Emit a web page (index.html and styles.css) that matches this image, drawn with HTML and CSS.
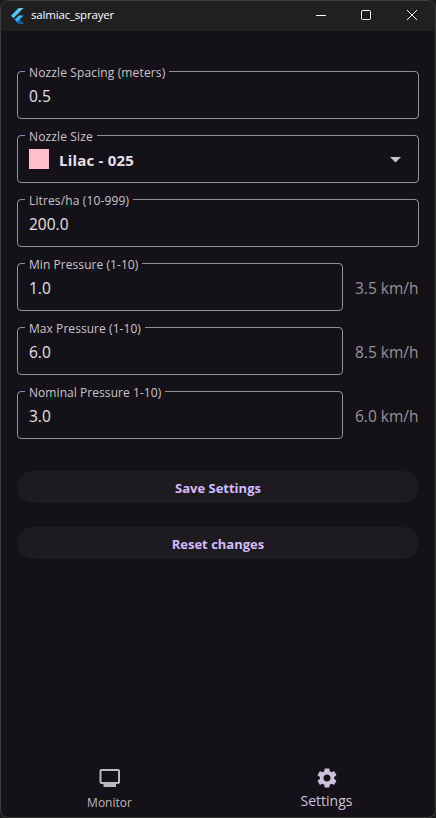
FILE: index.html
```html
<!DOCTYPE html>
<html lang="en">
<head>
<meta charset="utf-8">
<title>salmiac_sprayer</title>
<link rel="stylesheet" href="styles.css">
</head>
<body>
<div class="window">
  <header class="titlebar">
    <svg class="logo" width="13" height="16" viewBox="0 0 13 16">
      <path d="M7.6 0H12.7L2.4 10.3 0 7.7Z" fill="#54c5f8"/>
      <path d="M7.9 7.4H12.7L8.6 11.6 12.7 16H7.8L3.6 11.6Z" fill="#39b6f5"/>
      <path d="M6.1 14.1L8.6 11.6 12.7 16H7.8Z" fill="#0b5fa8"/>
    </svg>
    <h1 class="title">salmiac_sprayer</h1>
    <div class="controls">
      <svg width="46" height="30" viewBox="0 0 46 30"><path d="M18 14.5H28" stroke="#fff"/></svg>
      <svg width="46" height="30" viewBox="0 0 46 30"><rect x="17.5" y="9.5" width="9" height="9" rx="1" fill="none" stroke="#fff"/></svg>
      <svg width="45" height="30" viewBox="0 0 45 30"><path d="M17 9L27 19M27 9L17 19" stroke="#fff"/></svg>
    </div>
  </header>
  <main class="form">
    <div class="row">
      <fieldset class="field"><legend>Nozzle Spacing (meters)</legend><span class="value">0.5</span></fieldset>
    </div>
    <div class="row">
      <fieldset class="field"><legend>Nozzle Size</legend>
        <span class="swatch"></span><span class="value strong">Lilac - 025</span>
        <svg class="arrow" width="11" height="6" viewBox="0 0 11 6"><path d="M0 0H11L5.500 5.500Z" fill="#c4c3c5"/></svg>
      </fieldset>
    </div>
    <div class="row">
      <fieldset class="field"><legend>Litres/ha (10-999)</legend><span class="value">200.0</span></fieldset>
    </div>
    <div class="row">
      <fieldset class="field"><legend class="tight">Min Pressure (1-10)</legend><span class="value">1.0</span></fieldset>
      <span class="speed">3.5 km/h</span>
    </div>
    <div class="row">
      <fieldset class="field"><legend class="tight">Max Pressure (1-10)</legend><span class="value">6.0</span></fieldset>
      <span class="speed">8.5 km/h</span>
    </div>
    <div class="row">
      <fieldset class="field"><legend class="tight">Nominal Pressure 1-10)</legend><span class="value">3.0</span></fieldset>
      <span class="speed">6.0 km/h</span>
    </div>
    <div class="actions">
      <button class="button">Save Settings</button>
      <button class="button">Reset changes</button>
    </div>
  </main>
  <nav class="tabs">
    <a class="tab">
      <svg width="24" height="24" viewBox="0 0 24 24"><path d="M20 3H3.500C2.300 3 1.500 3.800 1.500 5v11c0 1.200.8 2 2 2h2v3h12.500v-3h2c1.200 0 2-.8 2-2V5c0-1.200-.8-2-2-2zm0 13H3.500V5h16.500v11z" fill="#bab9bb"/></svg>
      <span class="tab-label">Monitor</span>
    </a>
    <a class="tab active">
      <svg width="24" height="24" viewBox="0 0 24 24"><path d="M19.140 12.940c.04-.3.06-.61.06-.94 0-.32-.02-.64-.07-.94l2.030-1.580c.18-.14.23-.41.12-.61l-1.920-3.320c-.12-.22-.37-.29-.59-.22l-2.390.96c-.5-.38-1.030-.7-1.620-.94l-.36-2.540c-.04-.24-.24-.41-.48-.41h-3.840c-.24 0-.43.17-.47.41l-.36 2.540c-.59.24-1.130.57-1.620.94l-2.390-.96c-.22-.08-.47 0-.59.22L2.740 8.870c-.12.21-.08.47.12.61l2.030 1.580c-.05.3-.09.63-.09.94s.02.64.07.94l-2.030 1.580c-.18.14-.23.41-.12.61l1.920 3.320c.12.22.37.29.59.22l2.390-.96c.5.38 1.030.7 1.620.94l.36 2.540c.05.24.24.41.48.41h3.840c.24 0 .44-.17.47-.41l.36-2.540c.59-.24 1.130-.56 1.620-.94l2.390.96c.22.08.47 0 .59-.22l1.920-3.320c.12-.22.07-.47-.12-.61l-2.010-1.580zM12 15.600c-1.980 0-3.600-1.620-3.600-3.600s1.620-3.600 3.600-3.600 3.600 1.620 3.600 3.600-1.620 3.600-3.600 3.600z" fill="#ccc2dc"/></svg>
      <span class="tab-label">Settings</span>
    </a>
  </nav>
</div>
</body>
</html>
```
FILE: styles.css
```css
* { box-sizing: border-box; }

body {
  margin: 0;
  background: #1b1b1b;
  font-family: "Open Sans", "Noto Sans", sans-serif;
  color: #e6e0e9;
}

.window {
  display: flex;
  flex-direction: column;
  height: 818px;
  border: 1px solid #3e3e3f;
  border-radius: 8px;
  background: #141218;
  overflow: hidden;
}

.titlebar {
  display: flex;
  align-items: center;
  height: 30px;
  padding-left: 10px;
  background: #202020;
}

.logo { flex: none; margin-top: -1px; }

.title {
  flex: 1;
  margin: -2px 0 0 7px;
  font-size: 11.5px;
  font-weight: 400;
  line-height: 28px;
  letter-spacing: -0.18px;
  color: #fff;
}

.controls { display: flex; }

.form {
  display: flex;
  flex: 1;
  flex-direction: column;
  gap: 16px;
  padding: 40px 16px 0;
}

.row { display: flex; gap: 12px; }

.field {
  display: flex;
  flex: 1;
  align-items: center;
  height: 48px;
  min-width: 0;
  margin: 0;
  padding: 0 17px 0 11px;
  border: 1px solid #938f99;
  border-radius: 4px;
}

.field legend {
  height: 1px;
  margin-left: -4px;
  padding: 0 4px;
  font-size: 12px;
  line-height: 4px;
  letter-spacing: 0.13px;
  white-space: nowrap;
  color: #cac4d0;
}

.field .tight { letter-spacing: 0.06px; }

.value {
  margin-top: 2px;
  font-size: 15.5px;
  line-height: 24px;
}

.strong {
  font-size: 15px;
  font-weight: 700;
  letter-spacing: 0.22px;
}

.swatch {
  width: 20px;
  height: 20px;
  margin: 0 10px 0 0;
  background: #ffc0cb;
}

.arrow { margin: 1px 0 0 auto; }

.speed {
  width: 64px;
  margin-top: 13px;
  font-size: 15.5px;
  line-height: 24px;
  white-space: nowrap;
  color: #959498;
}

.actions {
  display: flex;
  flex-direction: column;
  gap: 24px;
  padding-top: 16px;
}

.button {
  height: 32px;
  padding: 1px 0 0;
  border: 0;
  border-radius: 16px;
  background: #1d1b20;
  color: #d0bcff;
  font: 700 13px "Open Sans", "Noto Sans", sans-serif;
}

.tabs { display: flex; height: 56px; }

.tab {
  display: flex;
  flex: 1;
  flex-direction: column;
  align-items: center;
  padding-top: 5px;
  color: #bab9bb;
}

.tab-label { font-size: 12px; line-height: 26px; }

.active { color: #ccc2dc; }

.active .tab-label { font-size: 14px; line-height: 22px; }
```
